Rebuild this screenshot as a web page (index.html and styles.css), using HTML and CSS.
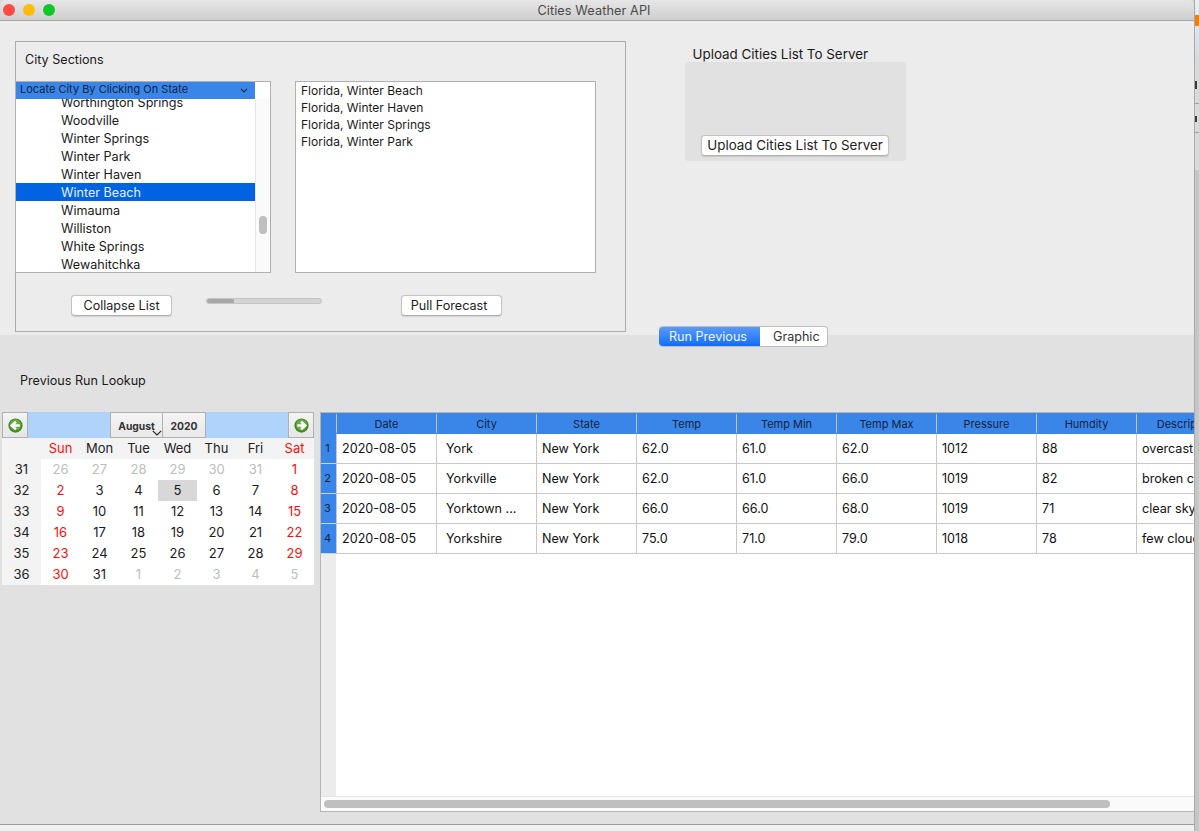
FILE: index.html
```html
<!DOCTYPE html>
<html lang="en">
<head>
<meta charset="utf-8">
<title>Cities Weather API</title>
<link rel="stylesheet" href="styles.css">
</head>
<body>
<div class="screen">
  <main class="window">
    <header class="titlebar">
      <div class="lights"><i class="light red"></i><i class="light yellow"></i><i class="light green"></i></div>
      <div class="title">Cities Weather API</div>
    </header>

    <section class="top-pane">
      <div class="group">
        <div class="group-title">City Sections</div>
        <div class="lists">
          <div class="list state-list">
            <div class="list-head"><span>Locate City By Clicking On State</span>
              <svg class="chev" width="8" height="5" viewBox="0 0 8 5"><path d="M1 1l3 3 3-3" fill="none" stroke="#1c2b4a" stroke-width="1.2"/></svg>
            </div>
            <div class="list-main">
              <div class="rows">
                <div class="row">Worthington Springs</div>
                <div class="row">Woodville</div>
                <div class="row">Winter Springs</div>
                <div class="row">Winter Park</div>
                <div class="row">Winter Haven</div>
                <div class="row selected">Winter Beach</div>
                <div class="row">Wimauma</div>
                <div class="row">Williston</div>
                <div class="row">White Springs</div>
                <div class="row">Wewahitchka</div>
              </div>
              <div class="vscroll"><div class="vthumb"></div></div>
            </div>
          </div>
          <div class="list result-list">
            <div class="result">Florida, Winter Beach</div>
            <div class="result">Florida, Winter Haven</div>
            <div class="result">Florida, Winter Springs</div>
            <div class="result">Florida, Winter Park</div>
          </div>
        </div>
        <div class="actions">
          <button class="btn collapse">Collapse List</button>
          <div class="progress"><div class="progress-fill"></div></div>
          <button class="btn pull">Pull Forecast</button>
        </div>
      </div>

      <div class="upload">
        <div class="upload-label">Upload Cities List To Server</div>
        <div class="upload-box"><button class="btn upload-btn">Upload Cities List To Server</button></div>
      </div>
    </section>

    <div class="segment"><span class="seg on">Run Previous</span><span class="seg">Graphic</span></div>

    <section class="bottom-pane">
      <div class="lookup">Previous Run Lookup</div>
      <div class="lookup-body">
        <div class="calendar">
          <div class="cal-nav">
            <div class="nav-btn"><svg width="15" height="15" viewBox="0 0 16 16"><circle cx="8" cy="8" r="7.6" fill="#3f8a22"/><circle cx="8" cy="7.4" r="6" fill="#68ab42"/><path d="M12.5 8H5.5M8.5 4L4 8l4.5 4" fill="none" stroke="#fff" stroke-width="2.6"/></svg></div>
            <div class="cal-mid">
              <div class="cal-pick month">August<svg class="month-chev" width="10" height="6" viewBox="0 0 10 6"><path d="M.8 .8L5 5 9.2 .8" fill="none" stroke="#222" stroke-width="1.1"/></svg></div>
              <div class="cal-pick year">2020</div>
            </div>
            <div class="nav-btn"><svg width="15" height="15" viewBox="0 0 16 16"><circle cx="8" cy="8" r="7.6" fill="#3f8a22"/><circle cx="8" cy="7.4" r="6" fill="#68ab42"/><path d="M3.5 8H10.5M7.5 4L12 8l-4.5 4" fill="none" stroke="#fff" stroke-width="2.6"/></svg></div>
          </div>
          <div class="cal-grid">
            <div class="hd"></div><div class="hd we">Sun</div><div class="hd">Mon</div><div class="hd">Tue</div><div class="hd">Wed</div><div class="hd">Thu</div><div class="hd">Fri</div><div class="hd we">Sat</div>
            <div class="wk">31</div><div class="d off">26</div><div class="d off">27</div><div class="d off">28</div><div class="d off">29</div><div class="d off">30</div><div class="d off">31</div><div class="d we">1</div>
            <div class="wk">32</div><div class="d we">2</div><div class="d">3</div><div class="d">4</div><div class="d today">5</div><div class="d">6</div><div class="d">7</div><div class="d we">8</div>
            <div class="wk">33</div><div class="d we">9</div><div class="d">10</div><div class="d">11</div><div class="d">12</div><div class="d">13</div><div class="d">14</div><div class="d we">15</div>
            <div class="wk">34</div><div class="d we">16</div><div class="d">17</div><div class="d">18</div><div class="d">19</div><div class="d">20</div><div class="d">21</div><div class="d we">22</div>
            <div class="wk">35</div><div class="d we">23</div><div class="d">24</div><div class="d">25</div><div class="d">26</div><div class="d">27</div><div class="d">28</div><div class="d we">29</div>
            <div class="wk">36</div><div class="d we">30</div><div class="d">31</div><div class="d off">1</div><div class="d off">2</div><div class="d off">3</div><div class="d off">4</div><div class="d off">5</div>
          </div>
        </div>

        <div class="table-wrap">
          <div class="table-main">
            <div class="gutter"><div class="corner"></div>
              <div class="rh">1</div><div class="rh">2</div><div class="rh">3</div><div class="rh">4</div>
            </div>
            <div class="table-clip">
              <table class="data">
                <thead><tr><th>Date</th><th>City</th><th>State</th><th>Temp</th><th>Temp Min</th><th>Temp Max</th><th>Pressure</th><th>Humdity</th><th>Description</th></tr></thead>
                <tbody>
                  <tr><td>2020-08-05</td><td class="city">York</td><td>New York</td><td>62.0</td><td>61.0</td><td>62.0</td><td>1012</td><td>88</td><td>overcast clouds</td></tr>
                  <tr><td>2020-08-05</td><td class="city">Yorkville</td><td>New York</td><td>62.0</td><td>61.0</td><td>66.0</td><td>1019</td><td>82</td><td>broken clouds</td></tr>
                  <tr><td>2020-08-05</td><td class="city">Yorktown ...</td><td>New York</td><td>66.0</td><td>66.0</td><td>68.0</td><td>1019</td><td>71</td><td>clear sky</td></tr>
                  <tr><td>2020-08-05</td><td class="city">Yorkshire</td><td>New York</td><td>75.0</td><td>71.0</td><td>79.0</td><td>1018</td><td>78</td><td>few clouds</td></tr>
                </tbody>
              </table>
            </div>
          </div>
          <div class="hscroll"><div class="hthumb"></div></div>
        </div>
      </div>
    </section>
    <footer class="status"></footer>
  </main>
  <aside class="desktop"><div class="d-orange"></div><div class="d-glyph"></div><div class="d-line"></div><div class="d-glyph second"></div><div class="d-line low"></div></aside>
</div>
</body>
</html>
```
FILE: styles.css
```css
* { box-sizing: border-box; }
html, body { margin: 0; padding: 0; }
body { width: 1199px; height: 831px; overflow: hidden; background: #d8d8d8; font-family: Inter, "Liberation Sans", sans-serif; font-size: 12.6px; color: #1a1a1a; }
.screen { display: flex; width: 1199px; height: 831px; }
.window { position: relative; width: 1195px; height: 831px; display: flex; flex-direction: column; border-right: 1px solid #a9a9a9; }
.titlebar { flex: none; height: 21px; display: flex; align-items: center; justify-content: center; position: relative; padding-right: 6px; background: linear-gradient(#e6e6e6, #cfcfcf); border-bottom: 1px solid #a6a6a6; border-radius: 5px 5px 0 0; }
.lights { position: absolute; left: 3px; top: 4px; display: flex; gap: 8px; }
.light { width: 12px; height: 12px; border-radius: 50%; display: block; }
.red { background: #fc4b44; }
.yellow { background: #fdbb0c; }
.green { background: #0fc828; }
.title { font-size: 12.7px; color: #4a4a4a; letter-spacing: .1px; }

.top-pane { flex: none; height: 314px; background: #ececec; padding: 20px 0 0 15px; display: flex; align-items: flex-start; }
.group { width: 611px; height: 291px; border: 1px solid #ababab; padding: 0; }
.group-title { height: 39px; padding: 10px 0 0 9px; line-height: 15px; }
.lists { display: flex; gap: 24px; }
.list { height: 192px; border: 1px solid #b0b0b0; background: #fff; }
.state-list { width: 256px; margin-left: -1px; overflow: hidden; display: flex; flex-direction: column; }
.result-list { width: 301px; padding: 0 5px; line-height: 17px; font-size: 12px; }
.list-head { flex: none; height: 17px; background: #3a86e8; color: #14233f; font-size: 11px; line-height: 15px; display: flex; align-items: flex-start; padding-left: 4px; margin-right: 15px; position: relative; }
.chev { position: absolute; right: 7px; top: 6px; }
.list-main { flex: 1; display: flex; min-height: 0; }
.rows { flex: 1; overflow: hidden; }
.row { height: 18px; line-height: 20px; padding-left: 45px; font-size: 12.6px; }
.row:first-child { margin-top: -6px; }
.row.selected { background: #0063e1; color: #e8f0ff; }
.vscroll { flex: none; width: 15px; background: #fafafa; border-left: 1px solid #e6e6e6; padding: 117px 0 0 3px; }
.vthumb { width: 8px; height: 18px; background: #bfbfbf; border-radius: 4px; }
.result { height: 17px; }

.actions { display: flex; align-items: flex-start; padding: 22px 0 0 55px; }
.btn { font: inherit; color: #222; background: #fff; border: 1px solid #c4c4c4; border-bottom-color: #b0b0b0; border-radius: 4px; height: 21px; padding: 0; line-height: 19px; box-shadow: 0 .5px 1px rgba(0,0,0,.12); }
.collapse { width: 101px; }
.progress { width: 116px; height: 6px; margin: 3px 79px 0 34px; background: #d4d4d4; border: 1px solid #c4c4c4; border-radius: 3px; overflow: hidden; }
.progress-fill { width: 27px; height: 100%; background: #a8a8a8; }
.pull { width: 101px; padding-right: 5px; }

.upload { margin-left: 59px; width: 221px; }
.upload-label { height: 21px; margin-left: 7.5px; font-size: 13.4px; line-height: 26px; white-space: nowrap; }
.upload-box { height: 99px; background: #e1e1e1; border: 1px solid #e0e0e0; border-radius: 3px; display: flex; justify-content: center; align-items: flex-end; padding: 0 1px 4px 0; }
.upload-btn { width: 188px; font-size: 13.4px; }

.segment { position: absolute; left: 659px; top: 326px; display: flex; height: 21px; border-radius: 4px; overflow: hidden; border: 1px solid #bdbdbd; border-left: 0; background: #fff; font-size: 12.6px; line-height: 20px; }
.seg { display: block; padding: 0 7px 0 13px; color: #333; }
.seg.on { width: 101px; padding: 0 0 0 10px; color: #f0f6ff; background: linear-gradient(#5e9cf8, #0f6cf6); margin-top: -1px; height: 21px; line-height: 21px; border-radius: 4px 0 0 4px; }

.bottom-pane { flex: none; height: 489px; background: #e1e1e1; padding-top: 36px; }
.lookup { height: 41px; padding-left: 20px; line-height: 20px; }
.lookup-body { display: flex; align-items: flex-start; padding-left: 2px; gap: 6px; }
.calendar { width: 312px; }
.cal-nav { height: 26px; display: flex; background: #b0d3fb; }
.nav-btn { width: 26px; height: 26px; background: linear-gradient(#f4f4f4, #e6e6e6); border: 1px solid #b0b0b0; display: flex; align-items: center; justify-content: center; }
.cal-mid { flex: 1; display: flex; justify-content: center; }
.cal-pick { height: 26px; background: linear-gradient(#f4f4f4, #e8e8e8); border: 1px solid #b0b0b0; font-size: 10.3px; font-weight: 700; color: #333; line-height: 26px; position: relative; text-align: center; }
.month { width: 53px; }
.year { width: 43px; border-left: 0; }
.month-chev { position: absolute; right: 0; bottom: 1px; }
.cal-grid { display: grid; grid-template-columns: repeat(8, 39px); grid-auto-rows: 21px; background: #fff; line-height: 21px; text-align: center; font-size: 13px; }
.hd { background: #f3f3f3; color: #222; }
.hd.we, .d.we { color: #fb0d0d; }
.wk { background: #f3f3f3; color: #222; }
.d { color: #1a1a1a; }
.d.off { color: #bdbdbd; }
.d.today { background: #d8d8d8; }

.table-wrap { width: 875px; height: 400px; border: 1px solid #b4b4b4; border-right: 0; background: #fff; display: flex; flex-direction: column; overflow: hidden; }
.table-main { flex: 1; display: flex; min-height: 0; }
.gutter { flex: none; width: 15px; background: #ececec; }
.corner { height: 21px; background: #3a86e8; }
.rh { height: 30px; background: #3a86e8; color: #14233f; font-size: 11px; line-height: 28px; text-align: center; padding-right: 2px; border-bottom: 1px solid #c3d5ec; }
.table-clip { flex: 1; overflow: hidden; }
.data { border-collapse: separate; border-spacing: 0; table-layout: fixed; width: 900px; font-size: 12.6px; }
.data th { width: 100px; height: 21px; padding: 0; background: #3a86e8; color: #14233f; font-size: 11px; font-weight: 400; text-align: center; border-left: 1px solid #c4c4c4; border-top: 2px solid #3a86e8; border-bottom: 2px solid #3a86e8; white-space: nowrap; overflow: hidden; }
.data td { height: 30px; padding: 0 0 0 5px; border-left: 1px solid #c8c8c8; border-bottom: 1px solid #c8c8c8; white-space: nowrap; overflow: hidden; color: #111; }
.data td.city { padding-left: 9px; }
.hscroll { flex: none; height: 15px; background: #fafafa; border-top: 1px solid #e6e6e6; padding: 3px 0 0 3px; }
.hthumb { width: 786px; height: 8px; background: #bfbfbf; border-radius: 4px; }

.status { flex: none; height: 7px; background: #f2f2f2; border-top: 1px solid #9c9c9c; }

.desktop { flex: none; width: 4px; height: 831px; background: linear-gradient(#e8eef4 0, #d8e2ea 40px, #dadada 60px, #dadada 170px, #c6c6c6 170px, #c6c6c6 831px); padding-top: 15px; }
.d-orange { height: 11px; background: #ef7d10; }
.d-glyph { width: 2px; height: 8px; margin-top: 55px; background: #3a3a3a; }
.d-glyph.second { margin-top: 12px; height: 6px; }
.d-line { height: 1px; margin-top: 14px; background: #a0a0a0; }
.d-line.low { margin-top: 10px; }
```
